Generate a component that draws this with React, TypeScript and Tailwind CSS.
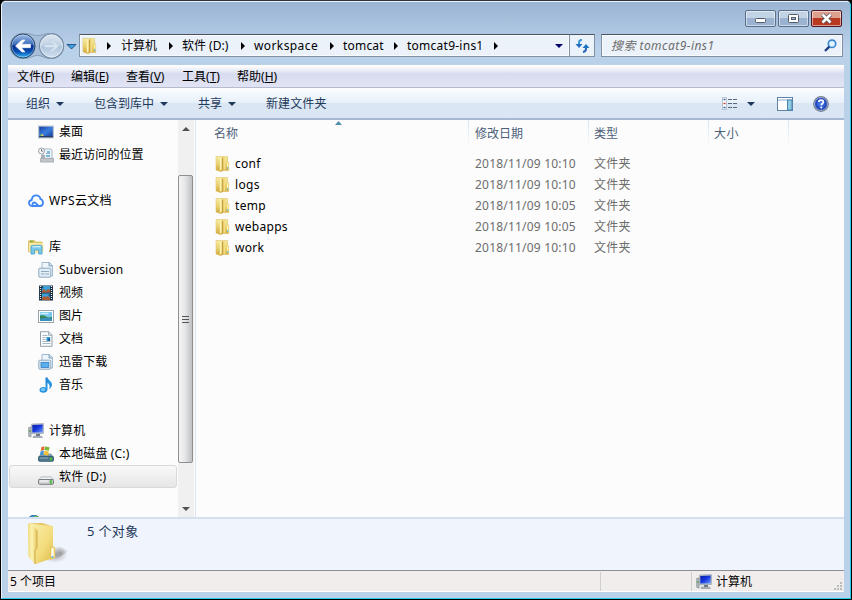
import React from "react";

type P = { children?: React.ReactNode; className?: string };

const Svg = ({ children, className = "", size = 16 }: P & { size?: number }) => (
  <svg viewBox="0 0 16 16" width={size} height={size} className={"shrink-0 " + className}>
    {children}
  </svg>
);

const Defs = () => (
  <svg width="0" height="0" className="absolute">
    <defs>
      <linearGradient id="fold" x1="0" x2="1" y1="0" y2="0">
        <stop offset="0" stopColor="#f0da80" /><stop offset=".45" stopColor="#fdf3b4" /><stop offset="1" stopColor="#e6c65c" />
      </linearGradient>
      <linearGradient id="foldB" x1="0" x2="1" y1="0" y2="1">
        <stop offset="0" stopColor="#f9efb0" /><stop offset=".6" stopColor="#f3dc7c" /><stop offset="1" stopColor="#dfbd4c" />
      </linearGradient>
      <linearGradient id="foldS" x1="0" x2="0" y1="0" y2="1">
        <stop offset="0" stopColor="#f5ea9e" /><stop offset=".5" stopColor="#ead271" /><stop offset="1" stopColor="#d3aa3e" />
      </linearGradient>
      <linearGradient id="desk" x1="0" x2="1" y1="0" y2="1">
        <stop offset="0" stopColor="#1a3f9c" /><stop offset=".5" stopColor="#3a7ee0" /><stop offset="1" stopColor="#183a8e" />
      </linearGradient>
      <linearGradient id="mon" x1="0" x2="1" y1="0" y2="1">
        <stop offset="0" stopColor="#0a1ba0" /><stop offset=".5" stopColor="#1638e0" /><stop offset="1" stopColor="#6d9cf4" />
      </linearGradient>
      <linearGradient id="orb" x1="0" x2="0" y1="0" y2="1">
        <stop offset="0" stopColor="#a3c1e8" /><stop offset=".42" stopColor="#3e6fbd" /><stop offset=".5" stopColor="#042c8c" /><stop offset=".75" stopColor="#0a51b4" /><stop offset="1" stopColor="#38c0f8" />
      </linearGradient>
      <linearGradient id="orb2" x1="0" x2="0" y1="0" y2="1">
        <stop offset="0" stopColor="#dbe6f2" /><stop offset=".48" stopColor="#c2d2e3" /><stop offset=".52" stopColor="#adc4dc" /><stop offset="1" stopColor="#d3e2f0" />
      </linearGradient>
      <linearGradient id="note" x1="0" x2="1" y1="0" y2="1">
        <stop offset="0" stopColor="#1766b5" /><stop offset=".6" stopColor="#2d9be5" /><stop offset="1" stopColor="#1261b0" />
      </linearGradient>
      <radialGradient id="help"><stop offset="0" stopColor="#5c8df2" /><stop offset=".6" stopColor="#264fc6" /><stop offset="1" stopColor="#15308b" /></radialGradient>
      <radialGradient id="shade"><stop offset="0" stopColor="#777" stopOpacity=".6" /><stop offset="1" stopColor="#888" stopOpacity="0" /></radialGradient>
    </defs>
  </svg>
);

const Folder = () => (
  <Svg>
    <path d="M1 .5H12.600v5l1.100.5v8.500H8L6 15.700 1 14z" fill="url(#foldS)" stroke="#dabb58" strokeWidth=".5" />
    <path d="M1.500 1 4.500 1.800v12.700L1.500 13.700z" fill="url(#foldS)" />
    <path d="M4.800 1.300h2v12.500L4.800 14.700z" fill="#fdf3b0" />
    <path d="M6.800 1.500h1.700V14l-1.700 1z" fill="#c9a23f" />
    <path d="M8.500 1h1.700v12.500l-1.700.8z" fill="#f3de83" />
    <path d="M12 6.500h1.300v6.500H12z" fill="#fff3b4" /><path d="M12.200 11h1v2h-1z" fill="#4db6ce" />
  </Svg>
);

const Desktop = () => (
  <Svg><rect x=".5" y="2" width="15" height="12" fill="#c6cfdb" stroke="#9da9b8" strokeWidth=".6" /><rect x="1.2" y="2.7" width="13.6" height="10.4" fill="url(#desk)" /><path d="M1.2 12h13.600v1.300H1.2z" fill="#243c62" /><path d="m2 10.500 1.500-.5.2 2H2z" fill="#55b867" /><path d="m3.500 10.500 1.500-.5.500 2h-2z" fill="#f1c85a" /></Svg>
);

const Recent = () => (
  <Svg><path d="M5 2h8l1 1v9H5z" fill="#eef5fb" stroke="#98a7b4" strokeWidth=".8" /><path d="M9 5h3M8 9h4" stroke="#4ca6dc" strokeWidth="1.4" /><path d="M8 6.500h4" stroke="#7e93a5" strokeWidth=".7" /><path d="m2.500 11.500 13-.2v3.800h-13z" fill="#c2c6c9" stroke="#8c9499" strokeWidth=".6" /><path d="M3 8h4v3.500H3z" fill="#a8b0b6" /><circle cx="3.500" cy="4" r="3" fill="#f7f9fa" stroke="#8f989e" strokeWidth=".9" /><path d="M3.500 2v2.200h1.700" fill="none" stroke="#586772" strokeWidth=".8" /></Svg>
);

const Cloud = () => (
  <Svg><path d="M10 13H4.200C2.200 13 1 11.700 1 10c0-1.700 1.100-2.800 2.700-3C4 4.100 5.800 2.400 8.100 2.400c2.300 0 4 1.500 4.400 3.800C14.200 6.500 15 8 15 9.700c0 2-1.300 3.300-3.200 3.300-2.800 0-3.200-3.500-5.300-3.500-1.300 0-2 .8-2 1.700" fill="none" stroke="#3f86f6" strokeWidth="1.800" strokeLinecap="round" /></Svg>
);

const Library = () => (
  <Svg><path d="M.5 2.500q0-1 1-1h5l1 1.500h6q1 0 1 1v9H.5z" fill="#e6cc6b" stroke="#cdae4d" strokeWidth=".6" /><path d="M1 4h13.500l1 1.500V13H1z" fill="#f9e8a0" /><path d="M2 2.500h3" stroke="#62ad4a" strokeWidth="1.300" /><path d="m4.500 6.500 8-.3q1.500 0 1.500 1V15h-3.300v-4H6.500v4H3V7.700q0-1.200 1.500-1.200z" fill="#7ac8e9" stroke="#429dca" strokeWidth=".8" /><path d="M4.500 7.700h8" stroke="#c9effc" strokeWidth="1.300" /></Svg>
);

const LibDoc = ({ filled = false }: { filled?: boolean }) => (
  <Svg><path d="M4 .5h7.500L14.500 3.500V14H4z" fill="#edf6fd" stroke="#8daac4" strokeWidth=".8" /><path d="M11 .5v3.500h3.500" fill="#c7ddec" stroke="#7191ac" strokeWidth=".8" /><rect x=".8" y="6.200" width="12" height="9" rx="1" fill="#e3edf5" stroke="#829fb8" strokeWidth=".9" />{filled ? <rect x="3" y="8.500" width="7.800" height="5" fill="#5baeee" stroke="#327fbf" strokeWidth=".8" /> : <path d="M3 9.500h8M3 12h3.500M7.500 12H11" stroke="#8da9bd" strokeWidth="1.200" />}</Svg>
);

const Film = () => (
  <Svg><path d="M1 .5h14v15H1z" fill="#172c3c" /><path d="M2.500 1v14M13.500 1v14" stroke="#e5edf0" strokeWidth="1.300" strokeDasharray="1 1" /><path d="M4 1h8v6.500H4zM4 8.500h8V15H4z" fill="#3da2db" /><path d="m4 6 2-2 2 2 2-2 2 1v2.500H4zm0 7 2-2 2 1 2-1 2 2v2H4z" fill="#a85b35" /><path d="m4 1 2 1-2 2zm8 8-2 1 2 2z" fill="#165783" /></Svg>
);
const Picture = () => (
  <Svg><rect x=".5" y="2.500" width="15" height="12" fill="#fff" stroke="#8f9ca5" strokeWidth=".9" /><path d="M2 4h12v9H2z" fill="#7bc8ee" /><path d="M2 7.500q3-1 6 .9t6 .3V13H2z" fill="#38875c" /><path d="M2 11q6-2 12-.5V13H2z" fill="#3b8fbd" /><path d="M2.500 5.500h8" stroke="#d4f0fa" strokeWidth="1.400" /></Svg>
);
const Doc = () => (
  <Svg><path d="M2.500.7h8.300L14 3.900v11.400H2.500z" fill="#fbfdfe" stroke="#86969f" strokeWidth=".9" /><path d="M10.500.8v3.500H14" fill="#dce6eb" stroke="#86969f" strokeWidth=".7" /><path d="M4.500 4.500h5M4.500 6.500h3M4.500 8.500h3M4.500 10.500h8M4.500 12.500h8" stroke="#92a4b0" strokeWidth=".8" /><path d="M8.500 6h3.700v4H8.500z" fill="#319bd1" /><path d="m9 9 3-2v3z" fill="#174f8c" /></Svg>
);
const Music = () => (
  <Svg><path d="M7.500.5h2c.5 2.500 4.500 3.500 4.500 7 0 2-1.700 4-3 4.800 1.500-3 .5-5.100-1.500-6.300v6.400c0 1.900-1.800 3.300-4.200 3.300S1.500 14.700 1.500 13s1.900-3 4-3c.8 0 1.500.2 2 .5z" fill="url(#note)" /><ellipse cx="5" cy="12.500" rx="2.300" ry="1.500" fill="#79caf5" /></Svg>
);
const Computer = () => (
  <Svg><path d="M.7 4.500 3 4v10l-2.300-.7z" fill="#b9c2c5" stroke="#71797f" strokeWidth=".6" /><path d="M1.200 8h1.200" stroke="#2f9a31" strokeWidth="1.500" /><path d="m3.500 1 12-.5v10l-12 .4z" fill="#bdc7d0" stroke="#8793a0" strokeWidth=".5" /><path d="m4.300 1.900 10.400-.5v8.100H4.300z" fill="url(#mon)" /><path d="M8 10.800h4v2.500H8z" fill="#6f7a84" /><path d="m5.500 13 8 .2 1 1.300H5z" fill="#b5bec6" stroke="#737e88" strokeWidth=".5" /></Svg>
);
const Drive = ({ os = false }: { os?: boolean }) => (
  <Svg><path d="m3 8 10-.1 2.500 3H.5z" fill={os ? "#7999ad" : "#f2f3f4"} stroke="#8c959a" strokeWidth=".6" /><rect x=".5" y="10.500" width="15" height="4.800" rx="1.200" fill={os ? "#50798e" : "#d3d6d8"} stroke={os ? "#365b70" : "#6e7377"} strokeWidth=".9" /><path d="M2 12h8" stroke={os ? "#88acb9" : "#fafafa"} /><path d="M12 11.500h1.800v3H12z" fill="#50dc3e" stroke="#338a38" strokeWidth=".4" />{os && <><path d="m3.500 1 3-.8L6 4 2.700 5z" fill="#e56b34" /><path d="m7 .5 4.500.8-.6 3.500L6.500 4z" fill="#7ab839" /><path d="m2.500 5.500 3.500-1-.6 4-3.500.6z" fill="#4096d5" /><path d="m6.500 4.700 4.300.8-.7 4L5.800 8.700z" fill="#f2bf35" /></>}</Svg>
);
const Globe = () => (
  <Svg><circle cx="6" cy="7" r="6.800" fill="#3b91cc" stroke="#3374a4" /><path d="m6 1 3-.5 2 2-3 2z" fill="#73bd5a" /></Svg>
);

const Down = ({ className = "" }: P) => (
  <svg width="8" height="4" viewBox="0 0 8 4" className={"shrink-0 " + className}><path d="M0 0h8L4 4z" fill="currentColor" /></svg>
);
const Right = ({ className = "" }: P) => (
  <svg width="4" height="8" viewBox="0 0 4 8" className={"shrink-0 " + className}><path d="M0 0 4 4 0 8z" fill="#000" /></svg>
);

const Row = ({ icon, label, depth = 1, selected = false, ls = "tracking-[0.100px]" }: { icon: React.ReactNode; label: string; depth?: number; selected?: boolean; ls?: string }) => (
  <div className={"flex h-[23px] w-[168px] shrink-0 items-center rounded-[3px] border pr-1 " + (depth ? "gap-[5px] pl-[28px] " : "gap-[5px] pl-[18px] ") + (selected ? "border-[#d9d9d9] bg-linear-to-b from-[#f9f9f9] to-[#e6e6e6]" : "border-transparent")}>
    {icon}
    <span className={"whitespace-nowrap " + ls}>{label}</span>
  </div>
);

const Menu = ({ t, k, w }: { t: string; k: string; w: string }) => (
  <span className={w}>{t}(<u className="underline-offset-1">{k}</u>)</span>
);

const files = [
  ["conf", "2018/11/09 10:10"],
  ["logs", "2018/11/09 10:10"],
  ["temp", "2018/11/09 10:05"],
  ["webapps", "2018/11/09 10:05"],
  ["work", "2018/11/09 10:10"],
];

const winBtn = "flex h-[17px] w-[31px] items-center justify-center rounded-[2px] border shadow-[inset_0_0_0_1px_rgba(255,255,255,0.5)] ";

export default function App() {
  return (
    <div className="h-[600px] w-[852px] overflow-hidden bg-black font-['Noto_Sans','Noto_Sans_CJK_SC',sans-serif] text-[12px] leading-[18px] text-black">
      <Defs />
      <div className="flex h-[600px] flex-col rounded-t-[6px] border border-t-[#30313b] border-r-black border-b-black border-l-black bg-[#b9d1ea]">
        <div className="flex h-[598px] flex-col rounded-t-[5px] border-t border-r border-b border-l border-t-[#e9f2fb] border-r-[#28cbe8] border-b-[#28cbe8] border-l-[#edf4fb] bg-linear-to-b from-[#9ab4d3] to-[#bad1ea] to-[8%] px-[6px] pb-[6px]">
          <header className="flex h-[63px] shrink-0 flex-col">
            <div className="flex h-[26px] items-end justify-end gap-[2px] pr-[2px] pb-[1px]">
              <div className={winBtn + "border-[#5b6f8b] bg-linear-to-b from-[#c3d3e6] from-45% to-[#9bb3d0] to-50%"}>
                <svg width="13" height="7" className="mt-[3px]"><rect x="1.500" y="1.500" width="10" height="4" rx="1" fill="#fff" stroke="#545b68" /></svg>
              </div>
              <div className={winBtn + "border-[#5b6f8b] bg-linear-to-b from-[#c3d3e6] from-45% to-[#9bb3d0] to-50%"}>
                <svg width="11" height="9"><rect x=".5" y=".5" width="10" height="8" rx="1" fill="#fff" stroke="#545b68" /><rect x="3.500" y="3.500" width="4" height="2" fill="#a7b9d1" stroke="#545b68" /></svg>
              </div>
              <div className={winBtn + "border-[#501722] bg-linear-to-b from-[#dda08f] from-45% to-[#b83820] to-50%"}>
                <svg width="13" height="11"><path d="m2.500 1.500 8 8m0-8-8 8" stroke="#555765" strokeWidth="4.200" /><path d="m2.500 1.500 8 8m0-8-8 8" stroke="#fff" strokeWidth="2.500" /></svg>
              </div>
            </div>
            <div className="flex h-[37px] items-start pt-[6px]">
              <svg width="71" height="28" viewBox="0 0 71 28" className="-mt-[2px] shrink-0">
                <path d="M15 1.500c9 0 9 2 14.500 2s6-2 14-2c16 0 16 25 0 25-8 0-9-3-14-3s-6 3-14.500 3c-17 0-17-25 0-25z" fill="#a6bed8" stroke="#7b91aa" strokeWidth=".8" />
                <circle cx="15" cy="14" r="12" fill="url(#orb)" stroke="#2b4466" strokeWidth="1" />
                <circle cx="15" cy="14" r="11" fill="none" stroke="#d5e8fa" strokeWidth=".6" opacity=".7" />
                <path d="m7.500 14 6.500-6h3l-3.500 4.300h9v3.400h-9l3.500 4.300h-3z" fill="#fff" stroke="#fff" strokeWidth=".6" />
                <circle cx="43.500" cy="14" r="12" fill="url(#orb2)" stroke="#778da6" strokeWidth="1.200" />
                <circle cx="43.500" cy="14" r="11" fill="none" stroke="#edf4fb" strokeWidth=".7" />
                <path d="m51 14-6.500-6h-3l4 4.500h-9v3h9l-4 4.500h3z" fill="#d7e4f0" stroke="#b9ccdf" strokeWidth=".7" />
                <path d="M59 12.500h9l-4.500 4.500z" fill="#3ba1de" stroke="#183d75" strokeWidth=".8" />
              </svg>
              <div className="flex h-[23px] w-[491px] shrink-0 items-center border border-[#8392a3] border-t-[#4d545c] bg-[#ecf2fa] shadow-[inset_0_0_0_1px_#f7fbff]">
                <span className="ml-[2px] w-[25px]"><Folder /></span>
                <Right /><span className="ml-[10px] w-[50px]">计算机</span>
                <Right className="-ml-[2px]" /><span className="ml-[9px] w-[59px]">软件 (D:)</span>
                <Right /><span className="ml-[9px] w-[76px] tracking-[0.400px]">workspace</span>
                <Right /><span className="ml-[9px] w-[51px] tracking-[0.200px]">tomcat</span>
                <Right /><span className="ml-[9px] w-[87px] tracking-[0.250px]">tomcat9-ins1</span>
                <Right />
                <Down className="mr-[6px] ml-auto text-[#00006b]" />
              </div>
              <div className="flex h-[23px] w-[25px] shrink-0 items-center justify-center border border-l-0 border-[#8392a3] border-t-[#4d545c] bg-[#ecf2fa]">
                <svg width="15" height="14" viewBox="0 0 15 14"><path d="M7 .8Q4 1 4 4v2" fill="none" stroke="#3c95d8" strokeWidth="2" /><path d="M.5 5h7L4 9z" fill="#236ebe" /><path d="M8 13q3-.2 3-3.500V8" fill="none" stroke="#2466b4" strokeWidth="2" /><path d="M7.500 9h7L11 5z" fill="#1d75c7" /></svg>
              </div>
              <div className="ml-[6px] flex h-[23px] w-[242px] shrink-0 items-center justify-between border border-[#8392a3] border-t-[#4d545c] bg-[#ecf2fa] pr-[5px] pl-[9px] text-[#6d6d6d] shadow-[inset_0_0_0_1px_#f7fbff]">
                <span className="italic tracking-[0.450px]">搜索 tomcat9-ins1</span>
                <svg width="13" height="13" viewBox="0 0 13 13"><circle cx="8" cy="4.800" r="3.700" fill="#e1f3ff" stroke="#3b88d0" strokeWidth="1.700" /><path d="M5.300 7.600 1 12" stroke="#203e80" strokeWidth="2.300" /></svg>
              </div>
            </div>
          </header>

          <main className="flex h-[527px] w-[836px] shrink-0 flex-col bg-[#fcfcfc]">
            <nav className="flex h-[23px] shrink-0 items-center border-t border-b border-t-white border-b-[#b6bccd] bg-linear-to-b from-white from-0% via-[#d8dcef] via-38% to-[#e1e4f4] pl-[9px]">
              <Menu t="文件" k="F" w="w-[54px]" />
              <Menu t="编辑" k="E" w="w-[55px]" />
              <Menu t="查看" k="V" w="w-[56px]" />
              <Menu t="工具" k="T" w="w-[55px]" />
              <Menu t="帮助" k="H" w="w-[60px]" />
            </nav>
            <div className="flex h-[32px] shrink-0 items-center border-b-2 border-[#a5b9d2] bg-linear-to-b from-[#fbfdff] via-[#e7f0fa] via-49% to-[#dbe6f4] to-51% pt-px pl-[18px] text-[#1e395b]">
              <span className="w-[30px]">组织</span><Down className="text-[#1e395b]" />
              <span className="ml-[30px] w-[66px]">包含到库中</span><Down className="text-[#1e395b]" />
              <span className="ml-[30px] w-[30px]">共享</span><Down className="text-[#1e395b]" />
              <span className="ml-[30px] tracking-[0.100px]">新建文件夹</span>
              <svg width="16" height="13" viewBox="0 0 16 13" className="ml-auto"><path d="M.5.500h4v12h-4z" fill="#fff" stroke="#9bacbe" strokeWidth=".7" /><path d="M1.500 2.500h2M1.500 10.500h2" stroke="#35649b" strokeWidth="1.400" /><path d="M1.500 6.500h2" stroke="#ce3a3a" strokeWidth="1.400" /><path d="M6 2.500h4m1 0h4M6 6.500h4m1 0h4M6 10.500h4m1 0h4" stroke="#58697d" /></svg>
              <Down className="ml-[9px] text-[#1e395b]" />
              <svg width="16" height="14" className="ml-[22px]"><rect x=".5" y=".5" width="15" height="13" fill="#fff" stroke="#5d82a8" /><path d="M1 3h14" stroke="#8bacca" /><rect x="10.500" y="3" width="4.500" height="10" fill="#8fcbe2" stroke="#4d83ad" /></svg>
              <svg width="16" height="16" viewBox="0 0 16 16" className="mr-[15px] ml-[20px]"><circle cx="8" cy="8" r="7.300" fill="url(#help)" stroke="#7a8492" strokeWidth="1.200" /><circle cx="8" cy="8" r="6.400" fill="none" stroke="#cbd8ee" strokeWidth=".7" /><path d="M5.800 6.100q0-2 2.300-2t2.300 1.900c0 1.400-2 1.600-2 3.200" fill="none" stroke="#fff" strokeWidth="1.700" /><circle cx="8.300" cy="11.500" r="1" fill="#fff" /></svg>
            </div>

            <section className="flex h-[397px] shrink-0">
              <aside className="flex w-[170px] shrink-0 flex-col overflow-hidden pl-[1px]">
                <Row icon={<Desktop />} label="桌面" />
                <Row icon={<Recent />} label="最近访问的位置" />
                <div className="h-[23px] shrink-0" />
                <Row icon={<Cloud />} label="WPS云文档" depth={0} ls="tracking-[0.300px]" />
                <div className="h-[23px] shrink-0" />
                <Row icon={<Library />} label="库" depth={0} />
                <Row icon={<LibDoc />} label="Subversion" ls="tracking-[0.200px]" />
                <Row icon={<Film />} label="视频" />
                <Row icon={<Picture />} label="图片" />
                <Row icon={<Doc />} label="文档" />
                <Row icon={<LibDoc filled />} label="迅雷下载" />
                <Row icon={<Music />} label="音乐" />
                <div className="h-[23px] shrink-0" />
                <Row icon={<Computer />} label="计算机" depth={0} />
                <Row icon={<Drive os />} label="本地磁盘 (C:)" ls="tracking-[0.150px]" />
                <Row icon={<Drive />} label="软件 (D:)" selected ls="tracking-[0.150px]" />
                <div className="h-[23px] shrink-0" />
                <Row icon={<Globe />} label="" depth={0} />
              </aside>
              <div className="flex w-[16px] shrink-0 flex-col items-start bg-[#f0f0f0]">
                <div className="flex h-[55px] shrink-0 items-start pt-[7px] pl-[4px]"><Down className="rotate-180 text-[#505050]" /></div>
                <div className="flex h-[288px] w-[15px] shrink-0 flex-col items-center justify-center gap-[2px] rounded-[2px] border border-[#8f8f8f] bg-linear-to-r from-[#f5f5f5] via-[#e6e7e8] via-45% to-[#bfc1c4]">
                  <div className="h-px w-[7px] bg-[#555]" /><div className="h-px w-[7px] bg-[#555]" /><div className="h-px w-[7px] bg-[#555]" />
                </div>
                <div className="flex flex-1 items-end pb-[6px] pl-[4px]"><Down className="text-[#505050]" /></div>
              </div>
              <div className="ml-[1px] flex flex-1 flex-col border-l border-[#d9e5f5]">
                <div className="relative flex h-[33px] shrink-0 items-start text-[#4c607a]">
                  <svg width="7" height="4" className="absolute top-[1px] left-[139px]"><path d="M0 4h7L3.500 0z" fill="#508fae" /></svg>
                  <div className="flex h-[27px] w-[273px] items-center justify-between pl-[18px]">名称<i className="h-[24px] w-px self-start bg-linear-to-b from-[#d8e5f6] to-[#f5f9fd]" /></div>
                  <div className="flex h-[27px] w-[120px] items-center justify-between pl-[6px]">修改日期<i className="h-[24px] w-px self-start bg-linear-to-b from-[#d8e5f6] to-[#f5f9fd]" /></div>
                  <div className="flex h-[27px] w-[120px] items-center justify-between pl-[5px]">类型<i className="h-[24px] w-px self-start bg-linear-to-b from-[#d8e5f6] to-[#f5f9fd]" /></div>
                  <div className="flex h-[27px] w-[80px] items-center justify-between pl-[5px] tracking-[0.500px]">大小<i className="h-[24px] w-px self-start bg-linear-to-b from-[#d8e5f6] to-[#f5f9fd]" /></div>
                </div>
                {files.map(([n, d]) => (
                  <div key={n} className="flex h-[21px] shrink-0 items-center pl-[19px] text-[#6d6d6d]">
                    <Folder />
                    <span className="w-[244px] pl-[4px] tracking-[0.300px] text-black">{n}</span>
                    <span className="w-[119px] tracking-[0.200px]">{d}</span>
                    <span className="tracking-[0.250px]">文件夹</span>
                  </div>
                ))}
              </div>
            </section>

            <section className="flex h-[53px] shrink-0 items-start border-t-2 border-[#d4e0f0] bg-[#f0f4fc] pl-[18px] text-[#1e395b]">
              <svg width="44" height="48" viewBox="0 0 44 48" className="mt-[1px] shrink-0">
                <path d="M26 42 43 31 31 25z" fill="url(#shade)" />
                <ellipse cx="29" cy="35" rx="13" ry="8" fill="url(#shade)" />
                <path d="M2.500 3.500 16 3l11 3.500v31L9.500 44z" fill="#e3c25c" />
                <path d="M3 3.500 26 6q1 0 1 1v31L9 44z" fill="url(#foldB)" />
                <path d="M2.500 3.500 10 8.500q1 1 1 2V28l-2 2v14l-6-6.500q-.7-1-.6-2L2 5z" fill="url(#fold)" />
                <path d="M11 10.500V28l-2 2v14" fill="none" stroke="#c9a548" strokeWidth=".9" />
                <path d="m24.500 27 3.500 0q1 0 1 1v9q0 1-1 1.500l-3.500 1z" fill="#f4dc81" stroke="#dcbd58" strokeWidth=".6" />
                <path d="M25.500 28.500h2V37h-2z" fill="#fff" /><circle cx="26.500" cy="37" r="1" fill="#57b5df" />
              </svg>
              <span className="mt-[3px] ml-[17px] text-[13px] tracking-[0.350px]">5 个对象</span>
            </section>
            <footer className="flex h-[22px] shrink-0 items-center border-t border-b border-t-[#8e8e92] border-b-white bg-[#f0edec] pt-px">
              <span className="flex h-[19px] w-[593px] items-center border-r border-[#d0cecd] pl-[2px]">5 个项目</span>
              <span className="h-[19px] w-[91px] border-r border-[#d0cecd]" />
              <span className="flex flex-1 items-center gap-[4px] pl-[4px]"><Computer />计算机</span>
              <svg width="10" height="10" className="mr-[1px] self-end"><path d="M7 1h2v2H7zM4 4h2v2H4zM7 4h2v2H7zM1 7h2v2H1zM4 7h2v2H4zM7 7h2v2H7z" fill="#bcbaba" /></svg>
            </footer>
          </main>
        </div>
      </div>
    </div>
  );
}
